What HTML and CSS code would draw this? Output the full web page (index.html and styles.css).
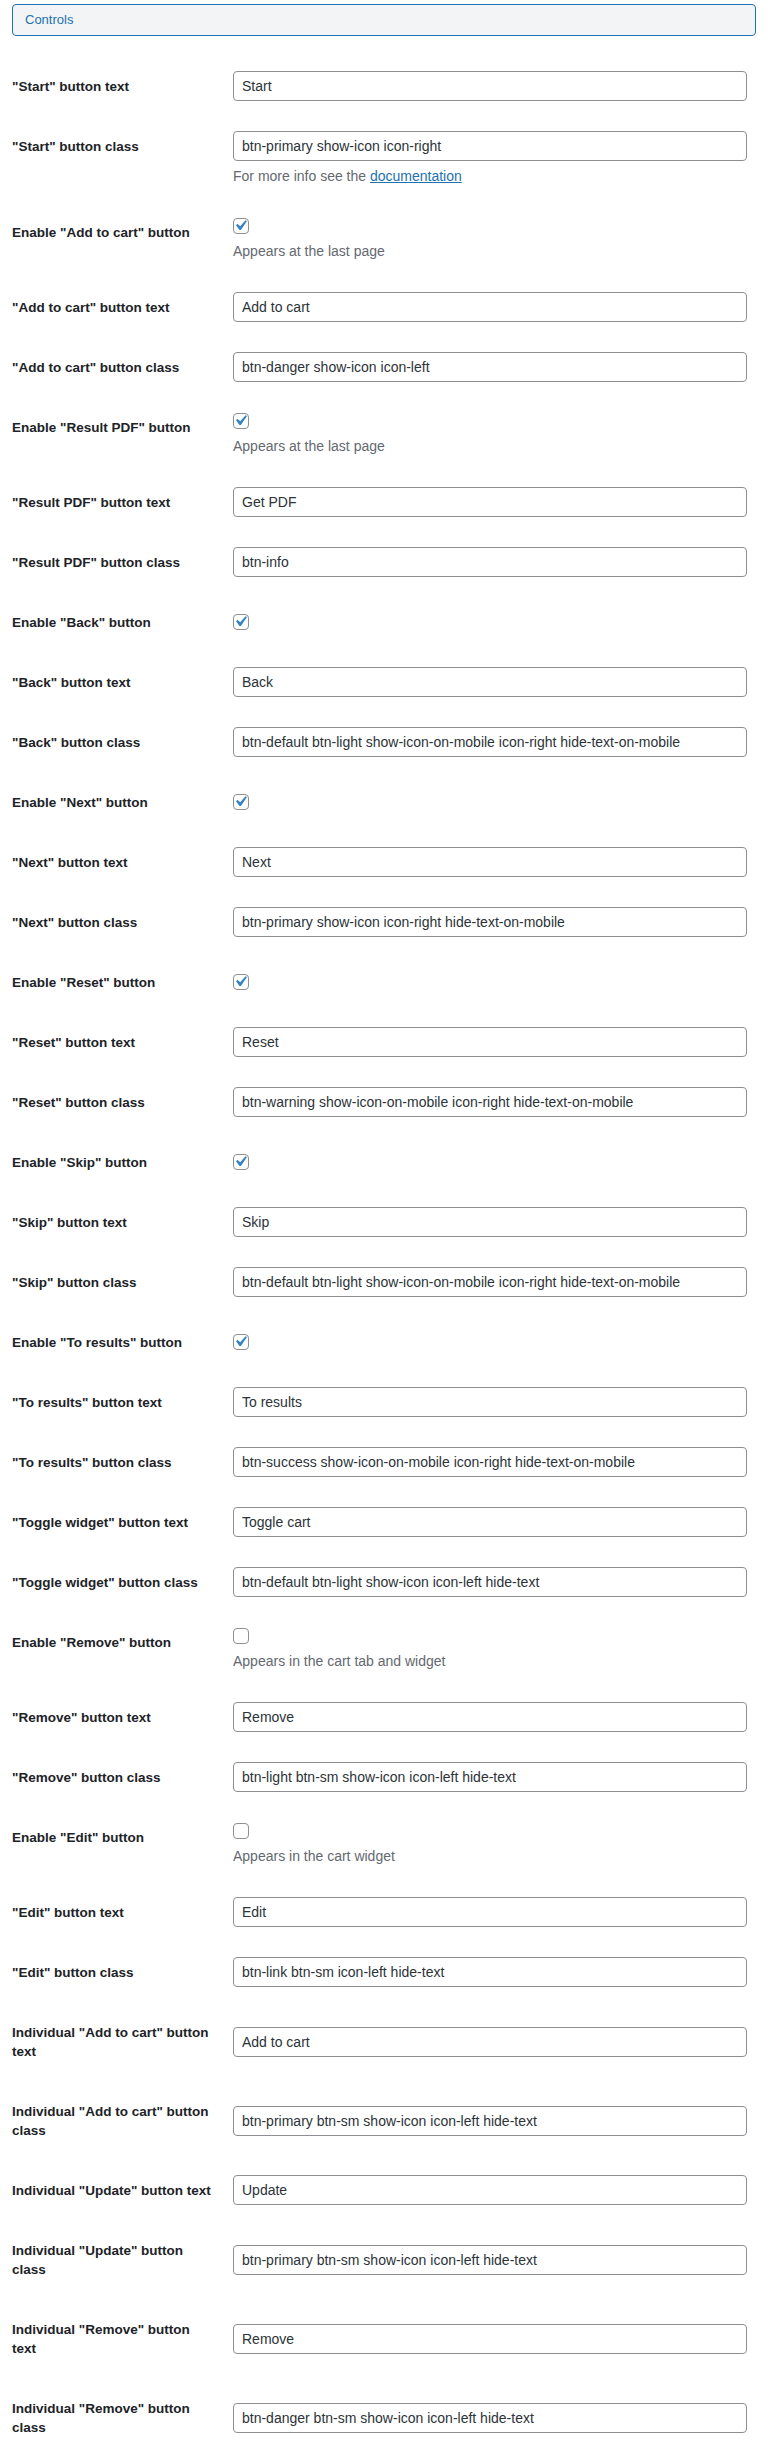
FILE: index.html
```html
<!DOCTYPE html>
<html lang="en">
<head>
<meta charset="utf-8">
<title>Controls</title>
<link rel="stylesheet" href="styles.css">
</head>
<body>
<div class="page">
  <div class="section-head">Controls</div>
  <div class="form">
    <div class="row"><div class="label">"Start" button text</div><div class="field"><input class="text" type="text" value="Start"></div></div>
    <div class="row"><div class="label">"Start" button class</div><div class="field"><input class="text" type="text" value="btn-primary show-icon icon-right"><p class="desc">For more info see the <a href="#">documentation</a></p></div></div>
    <div class="row"><div class="label">Enable "Add to cart" button</div><div class="field"><div class="check-line"><span class="checkbox"><svg viewBox="0 0 20 20"><path d="M14.83 4.89l1.34.94-5.81 8.38H9.02L5.78 9.67l1.34-1.25 2.57 2.4z"/></svg></span></div><p class="desc">Appears at the last page</p></div></div>
    <div class="row"><div class="label">"Add to cart" button text</div><div class="field"><input class="text" type="text" value="Add to cart"></div></div>
    <div class="row"><div class="label">"Add to cart" button class</div><div class="field"><input class="text" type="text" value="btn-danger show-icon icon-left"></div></div>
    <div class="row"><div class="label">Enable "Result PDF" button</div><div class="field"><div class="check-line"><span class="checkbox"><svg viewBox="0 0 20 20"><path d="M14.83 4.89l1.34.94-5.81 8.38H9.02L5.78 9.67l1.34-1.25 2.57 2.4z"/></svg></span></div><p class="desc">Appears at the last page</p></div></div>
    <div class="row"><div class="label">"Result PDF" button text</div><div class="field"><input class="text" type="text" value="Get PDF"></div></div>
    <div class="row"><div class="label">"Result PDF" button class</div><div class="field"><input class="text" type="text" value="btn-info"></div></div>
    <div class="row"><div class="label">Enable "Back" button</div><div class="field"><div class="check-line"><span class="checkbox"><svg viewBox="0 0 20 20"><path d="M14.83 4.89l1.34.94-5.81 8.38H9.02L5.78 9.67l1.34-1.25 2.57 2.4z"/></svg></span></div></div></div>
    <div class="row"><div class="label">"Back" button text</div><div class="field"><input class="text" type="text" value="Back"></div></div>
    <div class="row"><div class="label">"Back" button class</div><div class="field"><input class="text" type="text" value="btn-default btn-light show-icon-on-mobile icon-right hide-text-on-mobile"></div></div>
    <div class="row"><div class="label">Enable "Next" button</div><div class="field"><div class="check-line"><span class="checkbox"><svg viewBox="0 0 20 20"><path d="M14.83 4.89l1.34.94-5.81 8.38H9.02L5.78 9.67l1.34-1.25 2.57 2.4z"/></svg></span></div></div></div>
    <div class="row"><div class="label">"Next" button text</div><div class="field"><input class="text" type="text" value="Next"></div></div>
    <div class="row"><div class="label">"Next" button class</div><div class="field"><input class="text" type="text" value="btn-primary show-icon icon-right hide-text-on-mobile"></div></div>
    <div class="row"><div class="label">Enable "Reset" button</div><div class="field"><div class="check-line"><span class="checkbox"><svg viewBox="0 0 20 20"><path d="M14.83 4.89l1.34.94-5.81 8.38H9.02L5.78 9.67l1.34-1.25 2.57 2.4z"/></svg></span></div></div></div>
    <div class="row"><div class="label">"Reset" button text</div><div class="field"><input class="text" type="text" value="Reset"></div></div>
    <div class="row"><div class="label">"Reset" button class</div><div class="field"><input class="text" type="text" value="btn-warning show-icon-on-mobile icon-right hide-text-on-mobile"></div></div>
    <div class="row"><div class="label">Enable "Skip" button</div><div class="field"><div class="check-line"><span class="checkbox"><svg viewBox="0 0 20 20"><path d="M14.83 4.89l1.34.94-5.81 8.38H9.02L5.78 9.67l1.34-1.25 2.57 2.4z"/></svg></span></div></div></div>
    <div class="row"><div class="label">"Skip" button text</div><div class="field"><input class="text" type="text" value="Skip"></div></div>
    <div class="row"><div class="label">"Skip" button class</div><div class="field"><input class="text" type="text" value="btn-default btn-light show-icon-on-mobile icon-right hide-text-on-mobile"></div></div>
    <div class="row"><div class="label">Enable "To results" button</div><div class="field"><div class="check-line"><span class="checkbox"><svg viewBox="0 0 20 20"><path d="M14.83 4.89l1.34.94-5.81 8.38H9.02L5.78 9.67l1.34-1.25 2.57 2.4z"/></svg></span></div></div></div>
    <div class="row"><div class="label">"To results" button text</div><div class="field"><input class="text" type="text" value="To results"></div></div>
    <div class="row"><div class="label">"To results" button class</div><div class="field"><input class="text" type="text" value="btn-success show-icon-on-mobile icon-right hide-text-on-mobile"></div></div>
    <div class="row"><div class="label">"Toggle widget" button text</div><div class="field"><input class="text" type="text" value="Toggle cart"></div></div>
    <div class="row"><div class="label">"Toggle widget" button class</div><div class="field"><input class="text" type="text" value="btn-default btn-light show-icon icon-left hide-text"></div></div>
    <div class="row"><div class="label">Enable "Remove" button</div><div class="field"><div class="check-line"><span class="checkbox"></span></div><p class="desc">Appears in the cart tab and widget</p></div></div>
    <div class="row"><div class="label">"Remove" button text</div><div class="field"><input class="text" type="text" value="Remove"></div></div>
    <div class="row"><div class="label">"Remove" button class</div><div class="field"><input class="text" type="text" value="btn-light btn-sm show-icon icon-left hide-text"></div></div>
    <div class="row"><div class="label">Enable "Edit" button</div><div class="field"><div class="check-line"><span class="checkbox"></span></div><p class="desc">Appears in the cart widget</p></div></div>
    <div class="row"><div class="label">"Edit" button text</div><div class="field"><input class="text" type="text" value="Edit"></div></div>
    <div class="row"><div class="label">"Edit" button class</div><div class="field"><input class="text" type="text" value="btn-link btn-sm icon-left hide-text"></div></div>
    <div class="row"><div class="label">Individual "Add to cart" button text</div><div class="field"><input class="text" type="text" value="Add to cart"></div></div>
    <div class="row"><div class="label">Individual "Add to cart" button class</div><div class="field"><input class="text" type="text" value="btn-primary btn-sm show-icon icon-left hide-text"></div></div>
    <div class="row"><div class="label">Individual "Update" button text</div><div class="field"><input class="text" type="text" value="Update"></div></div>
    <div class="row"><div class="label">Individual "Update" button class</div><div class="field"><input class="text" type="text" value="btn-primary btn-sm show-icon icon-left hide-text"></div></div>
    <div class="row"><div class="label">Individual "Remove" button text</div><div class="field"><input class="text" type="text" value="Remove"></div></div>
    <div class="row"><div class="label">Individual "Remove" button class</div><div class="field"><input class="text" type="text" value="btn-danger btn-sm show-icon icon-left hide-text"></div></div>
  </div>
</div>
</body>
</html>
```

FILE: styles.css
```css
html, body {
  margin: 0;
  padding: 0;
  background: #ffffff;
}

body {
  font-family: "Liberation Sans", Arial, sans-serif;
  color: #1d2327;
}

.page {
  margin-left: 12px;
  width: 745px;
  padding-top: 4px;
}

.section-head {
  box-sizing: border-box;
  width: 744px;
  height: 32px;
  border: 1px solid #2271b1;
  border-radius: 4px;
  background: #f3f4f5;
  color: #2271b1;
  font-size: 13px;
  line-height: 30px;
  padding: 0 12px;
}

.form {
  margin-top: 20px;
}

.row {
  display: grid;
  grid-template-columns: 211px 1fr;
}

.label {
  align-self: start;
  padding: 21px 8px 20px 0;
  font-size: 13.5px;
  font-weight: 700;
  line-height: 19px;
  color: #1d2327;
}

.field {
  align-self: center;
  padding: 15px 10px;
}

.text {
  display: block;
  box-sizing: border-box;
  width: 100%;
  height: 30px;
  margin: 0;
  padding: 0 8px;
  border: 1px solid #8c8f94;
  border-radius: 4px;
  background: #ffffff;
  color: #2c3338;
  font-family: "Liberation Sans", Arial, sans-serif;
  font-size: 14px;
  outline: none;
}

.desc {
  margin: 4px 0 0;
  font-size: 14px;
  line-height: 22px;
  color: #646970;
}

.desc a {
  color: #2271b1;
  text-decoration: underline;
}

.check-line {
  height: 18px;
}

.checkbox {
  display: block;
  box-sizing: border-box;
  width: 16px;
  height: 16px;
  margin-top: 1px;
  border: 1px solid #8c8f94;
  border-radius: 4px;
  background: #ffffff;
}

.checkbox svg {
  display: block;
  width: 21px;
  height: 21px;
  margin: -4px 0 0 -4px;
  fill: #3582c4;
}
```
